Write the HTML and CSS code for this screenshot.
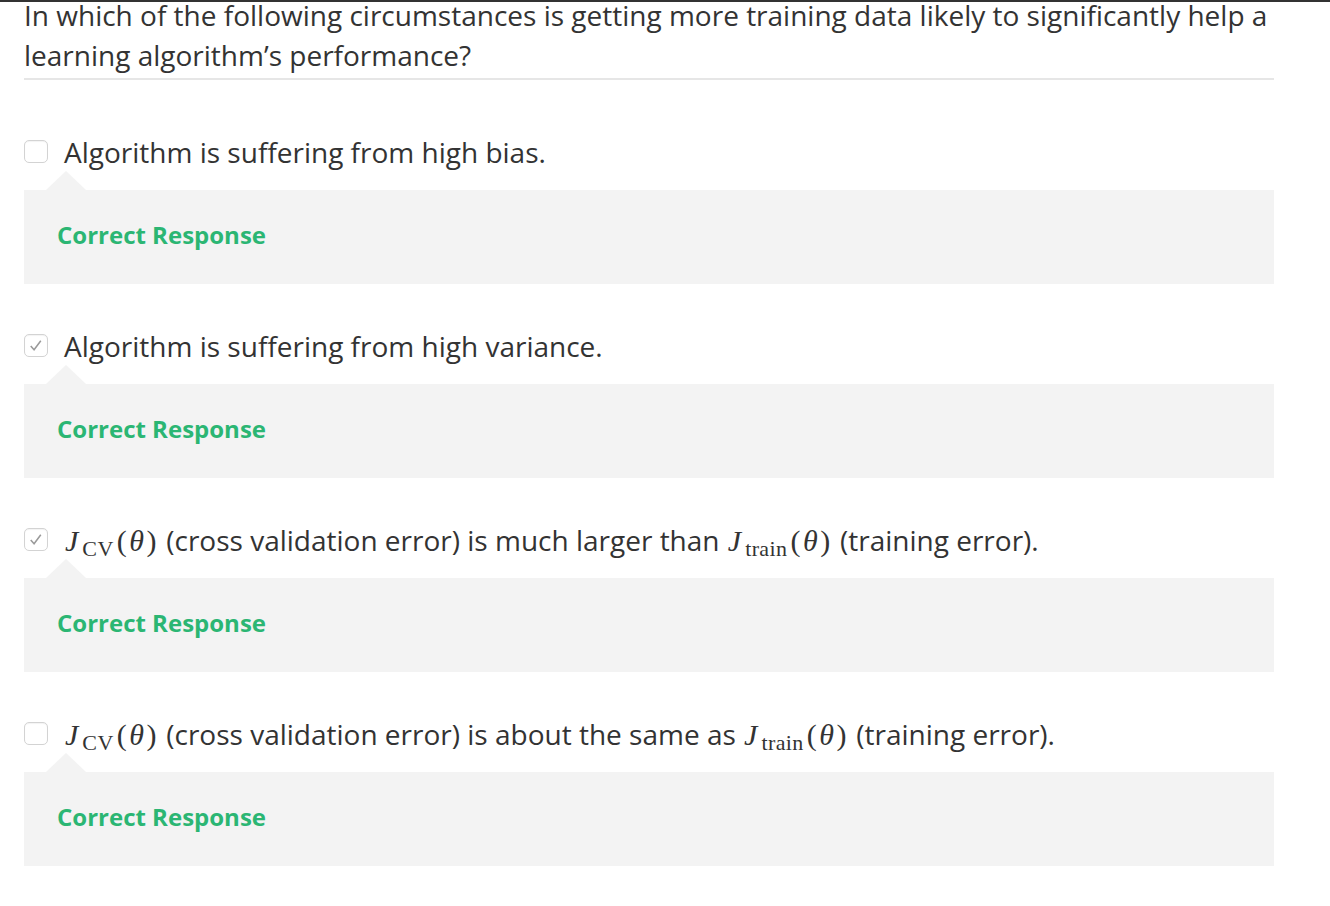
FILE: index.html
```html
<!DOCTYPE html>
<html>
<head>
<meta charset="utf-8">
<link rel="stylesheet" href="styles.css">
</head>
<body>
<div class="topbar"></div>
<div class="quiz">
  <div class="question">In which of the following circumstances is getting more training data likely to significantly help a learning algorithm’s performance?</div>

  <div class="option">
    <div class="opt-row">
      <span class="cb"></span>
      <span class="opt-text">Algorithm is suffering from high bias.</span>
    </div>
    <div class="feedback">Correct Response</div>
  </div>

  <div class="option">
    <div class="opt-row">
      <span class="cb checked"><svg viewBox="0 0 24 24" width="24" height="23"><path d="M6.5 12.5 L10 16.5 L17 7" fill="none" stroke="#9a9a9a" stroke-width="1.6"/></svg></span>
      <span class="opt-text">Algorithm is suffering from high variance.</span>
    </div>
    <div class="feedback">Correct Response</div>
  </div>

  <div class="option">
    <div class="opt-row">
      <span class="cb checked"><svg viewBox="0 0 24 24" width="24" height="23"><path d="M6.5 12.5 L10 16.5 L17 7" fill="none" stroke="#9a9a9a" stroke-width="1.6"/></svg></span>
      <span class="opt-text"><span class="math"><i class="mj">J</i><span class="msub">CV</span><span class="mp">(<i>θ</i>)</span></span> (cross validation error) is much larger than <span class="math"><i class="mj">J</i><span class="msub">train</span><span class="mp">(<i>θ</i>)</span></span> (training error).</span>
    </div>
    <div class="feedback">Correct Response</div>
  </div>

  <div class="option">
    <div class="opt-row">
      <span class="cb"></span>
      <span class="opt-text"><span class="math"><i class="mj">J</i><span class="msub">CV</span><span class="mp">(<i>θ</i>)</span></span> (cross validation error) is about the same as <span class="math"><i class="mj">J</i><span class="msub">train</span><span class="mp">(<i>θ</i>)</span></span> (training error).</span>
    </div>
    <div class="feedback">Correct Response</div>
  </div>
</div>
</body>
</html>
```

FILE: styles.css
```css
html, body {
  margin: 0;
  padding: 0;
  background: #fff;
}
body {
  font-family: "Open Sans", "Liberation Sans", sans-serif;
  color: #333;
}
.topbar {
  height: 2px;
  background: #333;
}
.quiz {
  width: 1250px;
  padding-left: 24px;
}
.question {
  margin-top: -7px;
  padding-bottom: 3px;
  font-size: 28px;
  line-height: 40px;
  border-bottom: 2px solid #e6e6e6;
  padding-right: 4px;
}
.option {
  margin-top: 42px;
}
.question + .option {
  margin-top: 52px;
}
.opt-row {
  display: flex;
  align-items: flex-start;
  font-size: 28px;
  line-height: 40px;
}
.cb {
  flex: none;
  box-sizing: border-box;
  width: 24px;
  height: 23px;
  margin-top: 8px;
  margin-right: 16px;
  border: 1px solid #d3d3d3;
  border-radius: 5px;
  background: #fff;
  box-shadow: inset 0 1px 1px rgba(0,0,0,0.05);
  position: relative;
}
.cb svg {
  position: absolute;
  left: -1px;
  top: -1px;
}
.math {
  font-family: "Liberation Serif", "DejaVu Serif", serif;
  font-size: 30px;
  line-height: 20px;
  white-space: nowrap;
}
.math i {
  font-style: italic;
}
.mj {
  margin-left: 1px;
  margin-right: 4px;
}
.msub {
  font-size: 22px;
  letter-spacing: 0.4px;
  position: relative;
  top: 5px;
}
.mp {
  margin-left: 3px;
  letter-spacing: 2.5px;
}
.feedback {
  position: relative;
  margin-top: 18px;
  background: #f3f3f3;
  padding: 30px 33px 34px;
  font-size: 24px;
  line-height: 30px;
  font-weight: 700;
  color: #2bb673;
}
.feedback::before {
  content: "";
  position: absolute;
  left: 22px;
  top: -19px;
  border-left: 20px solid transparent;
  border-right: 20px solid transparent;
  border-bottom: 19px solid #f3f3f3;
}
```
